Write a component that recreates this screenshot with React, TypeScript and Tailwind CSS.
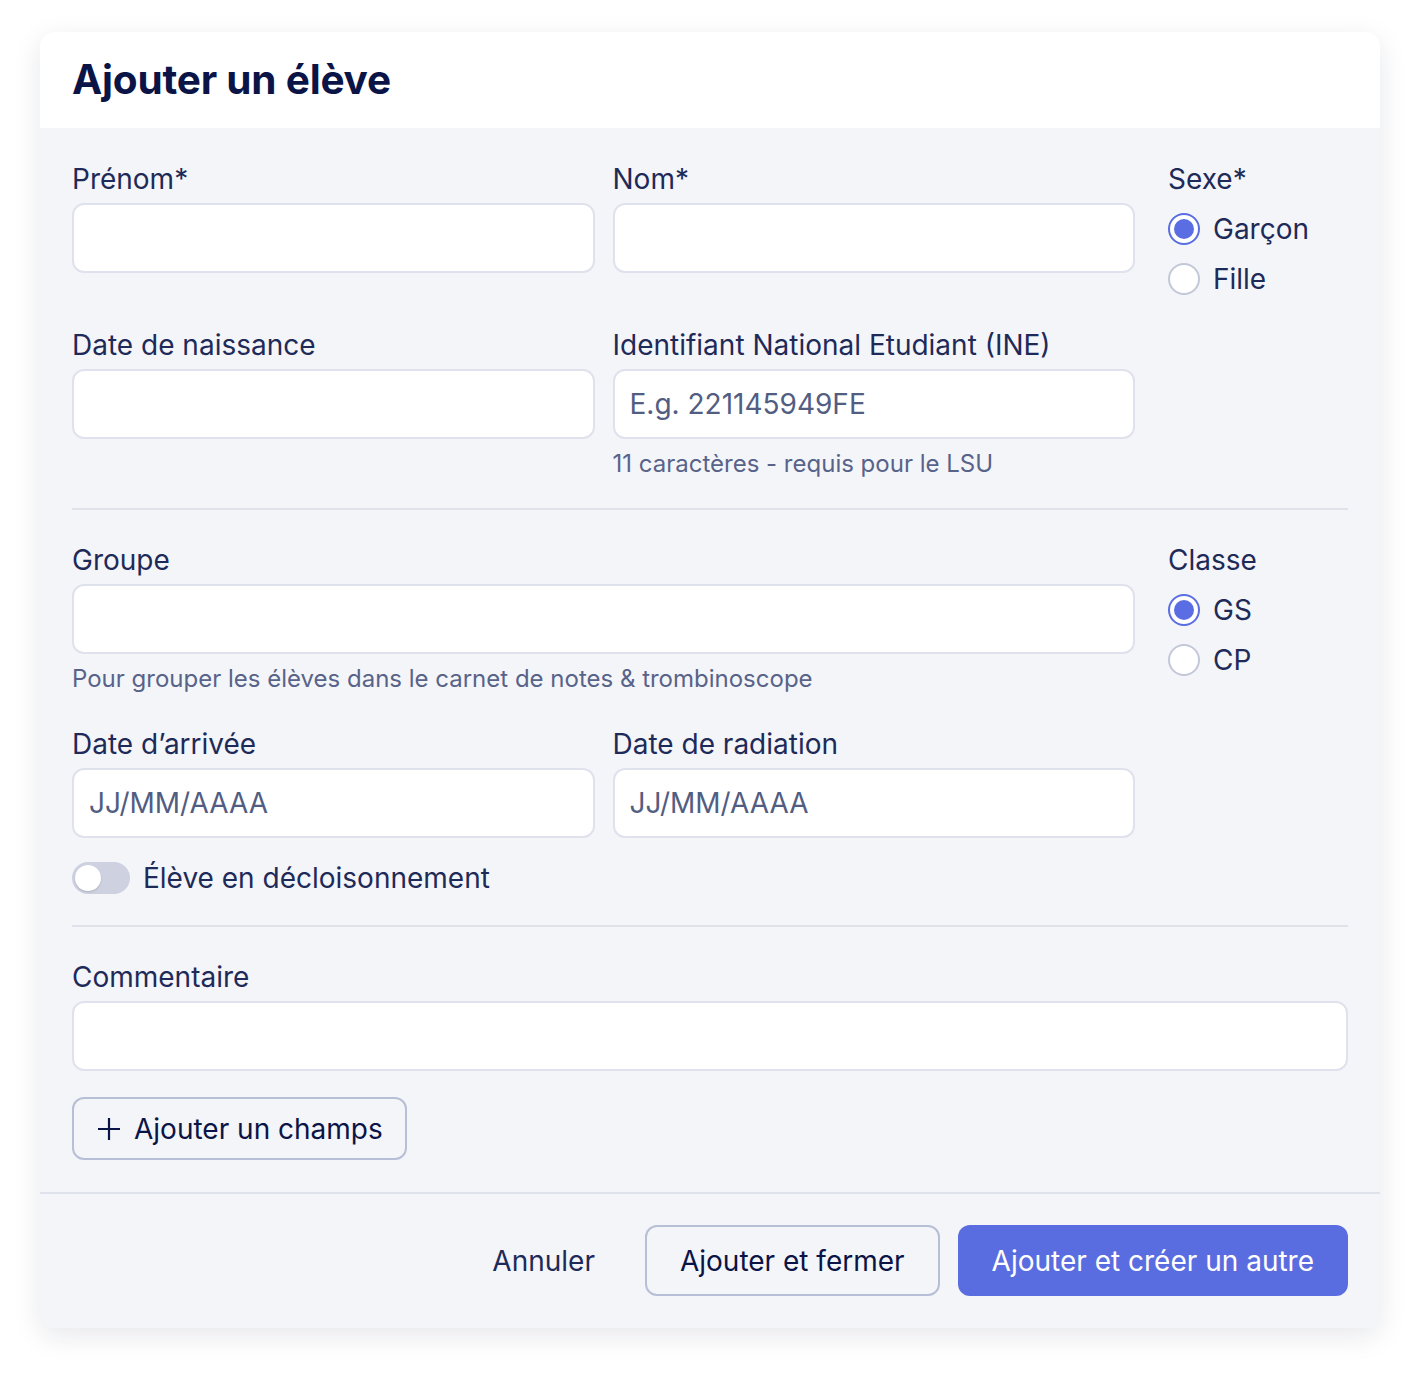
import React from 'react';

const font = { fontFamily: 'Inter, "Noto Sans", sans-serif' };

function Label({ children }: { children: React.ReactNode }) {
  return <div className="text-[28px] leading-[40px] text-[#1e2a58]">{children}</div>;
}

function Input({ placeholder = '' }: { placeholder?: string }) {
  return (
    <div className="mt-[4px] h-[70px] rounded-[12px] border-2 border-[#dfe2ec] bg-white px-[15px] flex items-center text-[28px] text-[#525d82]">
      {placeholder}
    </div>
  );
}

function Help({ children }: { children: React.ReactNode }) {
  return <div className="mt-[8px] text-[24px] leading-[34px] text-[#58638a]">{children}</div>;
}

function Radio({ label, checked }: { label: string; checked?: boolean }) {
  return (
    <div className="flex items-center gap-[13px] h-[50px]">
      {checked ? (
        <div className="w-[32px] h-[32px] rounded-full border-2 border-[#5a6de2] bg-white flex items-center justify-center">
          <div className="w-[20px] h-[20px] rounded-full bg-[#5a6de2]" />
        </div>
      ) : (
        <div className="w-[32px] h-[32px] rounded-full border-2 border-[#c2c8d8] bg-white" />
      )}
      <span className="text-[28px] text-[#1e2a58]">{label}</span>
    </div>
  );
}

export default function App() {
  return (
    <div className="min-h-screen bg-white pt-[32px] px-[40px]" style={font}>
      <div className="w-[1340px] rounded-[14px] overflow-hidden bg-[#f4f5f8] shadow-[0_8px_28px_rgba(20,30,60,0.10)]">
        <div className="h-[96px] bg-white px-[32px] flex items-center">
          <h1 className="text-[40.5px] font-bold text-[#0b1446] tracking-[-0.2px]">Ajouter un élève</h1>
        </div>

        <div className="px-[32px] pt-[31px] pb-[32px]">
          {/* identité */}
          <div className="flex gap-[33px]">
            <div className="flex-1">
              <div className="grid grid-cols-2 gap-x-[18px]">
                <div>
                  <Label>Prénom*</Label>
                  <Input />
                </div>
                <div>
                  <Label>Nom*</Label>
                  <Input />
                </div>
              </div>
              <div className="grid grid-cols-2 gap-x-[18px] mt-[52px]">
                <div>
                  <Label>Date de naissance</Label>
                  <Input />
                </div>
                <div>
                  <Label>Identifiant National Etudiant (INE)</Label>
                  <Input placeholder="E.g. 221145949FE" />
                  <Help>11 caractères - requis pour le LSU</Help>
                </div>
              </div>
            </div>
            <div className="w-[180px]">
              <Label>Sexe*</Label>
              <div className="mt-[5px]">
                <Radio label="Garçon" checked />
                <Radio label="Fille" />
              </div>
            </div>
          </div>

          <div className="mt-[27px] h-[2px] bg-[#dfe2ea]" />

          {/* scolarité */}
          <div className="flex gap-[33px] mt-[30px]">
            <div className="flex-1">
              <Label>Groupe</Label>
              <Input />
              <Help>Pour grouper les élèves dans le carnet de notes &amp; trombinoscope</Help>
              <div className="grid grid-cols-2 gap-x-[18px] mt-[28px]">
                <div>
                  <Label>Date d’arrivée</Label>
                  <Input placeholder="JJ/MM/AAAA" />
                </div>
                <div>
                  <Label>Date de radiation</Label>
                  <Input placeholder="JJ/MM/AAAA" />
                </div>
              </div>
              <div className="flex items-center gap-[13px] mt-[23px] h-[34px]">
                <div className="w-[58px] h-[32px] rounded-full bg-[#cdd1e0] p-[3px]">
                  <div className="w-[26px] h-[26px] rounded-full bg-white shadow-[0_1px_2px_rgba(0,0,0,0.15)]" />
                </div>
                <span className="text-[28px] text-[#1e2a58]">Élève en décloisonnement</span>
              </div>
            </div>
            <div className="w-[180px]">
              <Label>Classe</Label>
              <div className="mt-[5px]">
                <Radio label="GS" checked />
                <Radio label="CP" />
              </div>
            </div>
          </div>

          <div className="mt-[30px] h-[2px] bg-[#dfe2ea]" />

          <div className="mt-[30px]">
            <Label>Commentaire</Label>
            <Input />
          </div>

          <button className="mt-[26px] h-[63px] px-[22px] rounded-[12px] border-2 border-[#b7bfd6] flex items-center gap-[12px] text-[28px] text-[#0b1446]">
            <svg width="26" height="26" viewBox="0 0 26 26" fill="none" stroke="#0b1446" strokeWidth="2.2">
              <path d="M13 2v22M2 13h22" />
            </svg>
            Ajouter un champs
          </button>
        </div>

        <div className="border-t-2 border-[#dfe2ea] px-[32px] pt-[31px] pb-[32px] flex justify-end items-center gap-[18px]">
          <button className="h-[71px] px-[32px] text-[28px] text-[#1e2a58]">Annuler</button>
          <button className="h-[71px] px-[33px] rounded-[12px] border-2 border-[#b7bfd6] text-[28px] text-[#0b1446]">
            Ajouter et fermer
          </button>
          <button className="h-[71px] px-[34px] rounded-[12px] bg-[#5a6de0] text-[28px] text-white">
            Ajouter et créer un autre
          </button>
        </div>
      </div>
    </div>
  );
}
